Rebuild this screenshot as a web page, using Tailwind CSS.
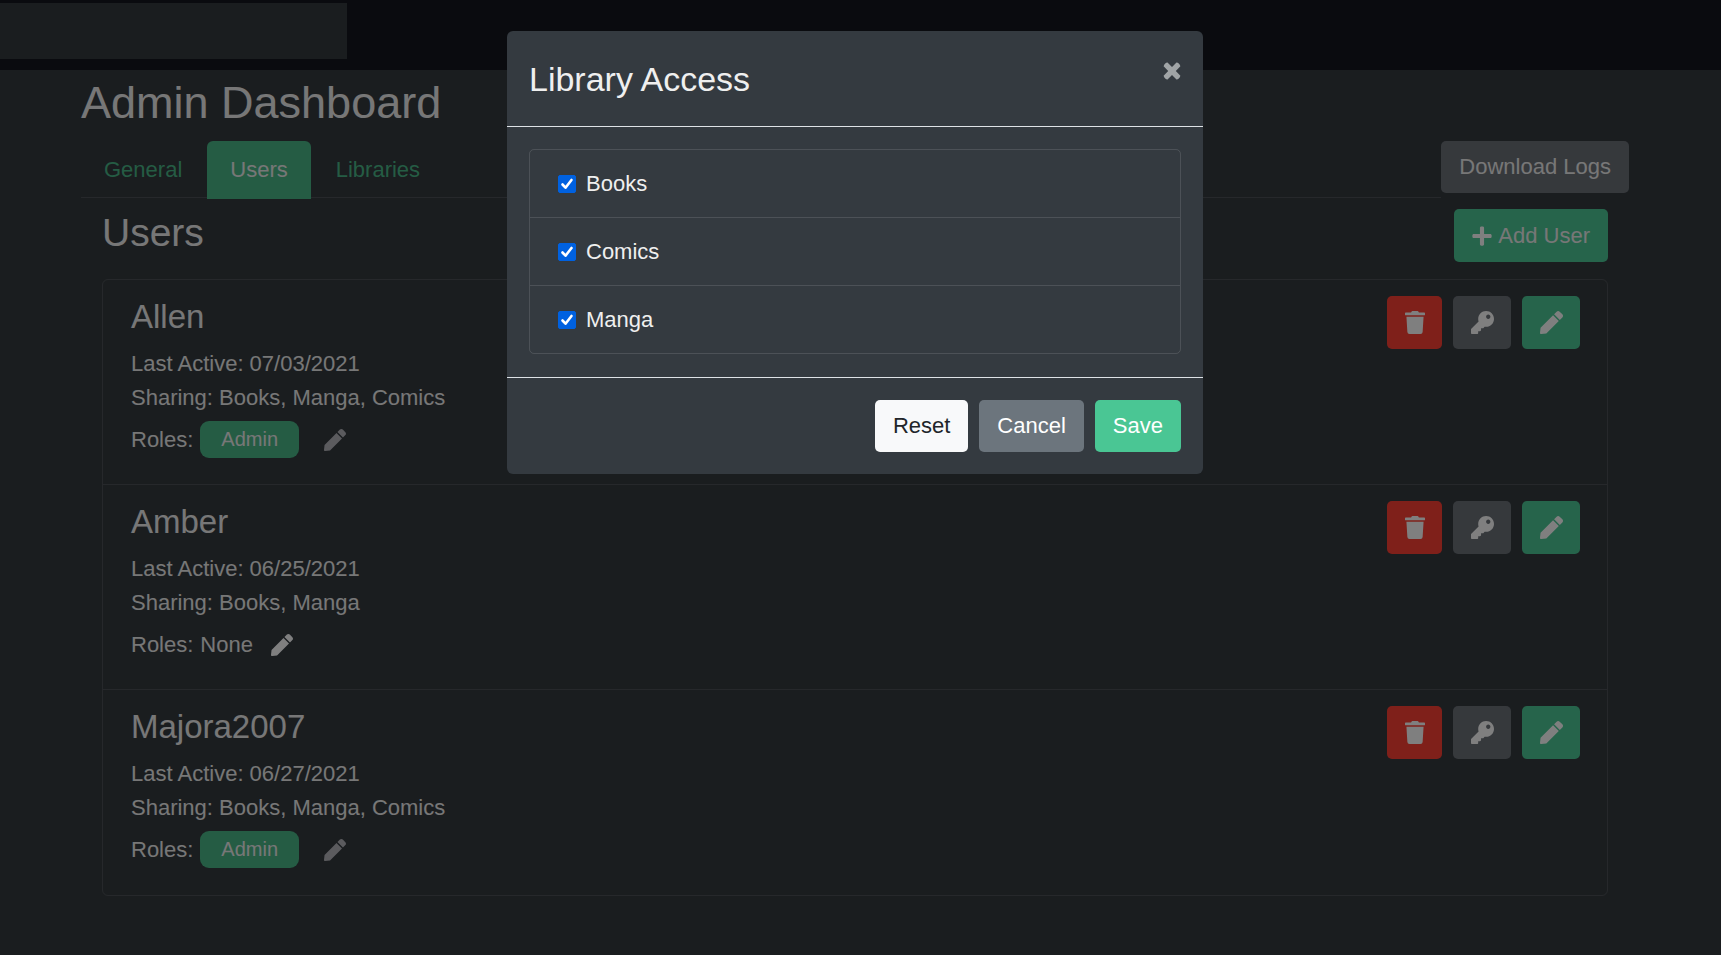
<!DOCTYPE html>
<html lang="en">
<head>
<meta charset="utf-8">
<meta name="viewport" content="width=device-width, initial-scale=1">
<title>Admin Dashboard</title>
<script src="https://cdn.jsdelivr.net/npm/@tailwindcss/browser@4"></script>
</head>
<body class="min-h-screen bg-[#343a3f] font-['Liberation_Sans',Arial,sans-serif] text-[22px] leading-[34px] text-[#efefef]">

<svg class="hidden" aria-hidden="true">
  <symbol id="trash" viewBox="0 0 448 512"><path d="M432 32H312l-9.4-18.7A24 24 0 0 0 281.1 0H166.8a23.72 23.72 0 0 0-21.4 13.3L136 32H16A16 16 0 0 0 0 48v32a16 16 0 0 0 16 16h416a16 16 0 0 0 16-16V48a16 16 0 0 0-16-16zM32 128l21.2 339a48 48 0 0 0 47.9 45h245.8a48 48 0 0 0 47.9-45L416 128z"/></symbol>
  <symbol id="key" viewBox="0 0 512 512"><path d="M512 176.001C512 273.203 433.202 352 336 352c-11.22 0-22.19-1.062-32.827-3.069l-24.012 27.014A23.999 23.999 0 0 1 261.223 384H224v40c0 13.255-10.745 24-24 24h-40v40c0 13.255-10.745 24-24 24H24c-13.255 0-24-10.745-24-24v-78.059c0-6.365 2.529-12.47 7.029-16.971l161.802-161.802C163.108 213.814 160 195.271 160 176 160 78.798 238.797.001 335.999 0 433.488-.001 512 78.511 512 176.001zM336 128c0 26.51 21.49 48 48 48s48-21.49 48-48-21.49-48-48-48-48 21.49-48 48z"/></symbol>
  <symbol id="pen" viewBox="0 0 512 512"><path d="M290.74 93.24l128.02 128.02-277.99 277.99-114.14 12.6C11.35 513.54-1.56 500.62.14 485.34l12.7-114.22 277.9-277.88zm207.2-19.06l-60.11-60.11c-18.75-18.75-49.16-18.75-67.91 0l-56.55 56.55 128.02 128.02 56.55-56.55c18.75-18.76 18.75-49.16 0-67.91z"/></symbol>
  <symbol id="plus" viewBox="0 0 448 512"><path d="M416 208H272V64c0-17.67-14.33-32-32-32h-32c-17.67 0-32 14.33-32 32v144H32c-17.67 0-32 14.33-32 32v32c0 17.67 14.33 32 32 32h144v144c0 17.67 14.33 32 32 32h32c17.67 0 32-14.33 32-32V304h144c17.67 0 32-14.33 32-32v-32c0-17.67-14.33-32-32-32z"/></symbol>
  <symbol id="check" viewBox="0 0 18 18"><path d="M4.5 9.5l3 3.2 6-7.7" fill="none" stroke="currentColor" stroke-width="2.6" stroke-linecap="round" stroke-linejoin="round"/></symbol>
  <symbol id="close" viewBox="0 0 18 18"><path d="M4.500 0.500 Q3.500 0.300 2.500 1.200 Q0.800 2.500 0.600 4.200L5.200 9 0.600 13.800Q0.800 15.500 2.500 16.800Q3.500 17.700 4.500 17.500L9 13 13.500 17.500Q14.500 17.700 15.500 16.800Q17.200 15.500 17.400 13.800L12.800 9 17.400 4.200Q17.200 2.500 15.500 1.200Q14.500 0.300 13.500 0.500L9 5Z"/></symbol>
</svg>

<header class="bg-[#15171e] pt-[3px] pb-[11px]">
  <div class="h-14 w-[347px] bg-[#343a3f]"></div>
</header>

<main class="pr-[11px]">
  <div class="mx-auto max-w-[1590px] px-[21px] pt-1.5">
    <h1 class="mb-3 text-[45px] leading-[53px]">Admin Dashboard</h1>

    <div class="flex items-start">
      <nav class="flex-1 border-b border-white/12">
        <ul class="-mb-0.5 flex gap-0.5">
          <li><a href="#general" class="block px-[23px] py-3 text-[#4ab888]">General</a></li>
          <li><a href="#users" aria-current="page" class="block rounded-t-md bg-[#4ab888] px-[23px] py-3">Users</a></li>
          <li><a href="#libraries" class="block px-[23px] py-3 text-[#4ab888]">Libraries</a></li>
        </ul>
      </nav>
      <button type="button" class="rounded-[5px] bg-[#6c7279] px-[18px] py-[9px]">Download Logs</button>
    </div>

    <section class="px-[21px] pt-[11px]">
      <div class="mb-[17px] flex items-start justify-between">
        <h2 class="text-[39px] leading-[47px]">Users</h2>
        <button type="button" class="flex h-[53px] items-center gap-1.5 rounded-[5px] bg-[#4cc896] px-[18px]"><svg class="h-[22px] w-5 fill-white"><use href="#plus"/></svg>Add User</button>
      </div>

      <ul class="divide-y divide-white/12 rounded-md border border-white/12">
        <li class="flex h-[205px] items-start justify-between pt-4 pr-[27px] pl-7">
          <div>
            <h3 class="mb-[9px] text-[33px] leading-[42px]">Allen</h3>
            <div>Last Active: 07/03/2021</div>
            <div>Sharing: Books, Manga, Comics</div>
            <div class="mt-1.5 flex items-center"><span class="mr-[7px]">Roles:</span><span class="rounded-[9px] bg-[#4ab888] px-[21px] py-1 text-xl leading-[29px]">Admin</span><button type="button" aria-label="Edit roles of Allen" class="ml-[25px]"><svg class="size-[22px] fill-[#b6b6bc]"><use href="#pen"/></svg></button></div>
          </div>
          <div class="flex gap-[11px]">
            <button type="button" aria-label="Delete Allen" class="grid h-[53px] w-[55px] place-items-center rounded-[5px] bg-[#ff4034]"><svg class="h-[23px] w-5 fill-white"><use href="#trash"/></svg></button>
            <button type="button" aria-label="Reset password of Allen" class="grid h-[53px] w-[58px] place-items-center rounded-[5px] bg-[#6c7279]"><svg class="size-[23px] fill-white"><use href="#key"/></svg></button>
            <button type="button" aria-label="Edit Allen" class="grid h-[53px] w-[58px] place-items-center rounded-[5px] bg-[#4cc896]"><svg class="size-[23px] fill-white"><use href="#pen"/></svg></button>
          </div>
        </li>
        <li class="flex h-[205px] items-start justify-between pt-4 pr-[27px] pl-7">
          <div>
            <h3 class="mb-[9px] text-[33px] leading-[42px]">Amber</h3>
            <div>Last Active: 06/25/2021</div>
            <div>Sharing: Books, Manga</div>
            <div class="mt-2 flex items-center"><span class="mr-[7px]">Roles:</span><span>None</span><button type="button" aria-label="Edit roles of Amber" class="ml-[18px]"><svg class="size-[22px] fill-white"><use href="#pen"/></svg></button></div>
          </div>
          <div class="flex gap-[11px]">
            <button type="button" aria-label="Delete Amber" class="grid h-[53px] w-[55px] place-items-center rounded-[5px] bg-[#ff4034]"><svg class="h-[23px] w-5 fill-white"><use href="#trash"/></svg></button>
            <button type="button" aria-label="Reset password of Amber" class="grid h-[53px] w-[58px] place-items-center rounded-[5px] bg-[#6c7279]"><svg class="size-[23px] fill-white"><use href="#key"/></svg></button>
            <button type="button" aria-label="Edit Amber" class="grid h-[53px] w-[58px] place-items-center rounded-[5px] bg-[#4cc896]"><svg class="size-[23px] fill-white"><use href="#pen"/></svg></button>
          </div>
        </li>
        <li class="flex h-[205px] items-start justify-between pt-4 pr-[27px] pl-7">
          <div>
            <h3 class="mb-[9px] text-[33px] leading-[42px]">Majora2007</h3>
            <div>Last Active: 06/27/2021</div>
            <div>Sharing: Books, Manga, Comics</div>
            <div class="mt-1.5 flex items-center"><span class="mr-[7px]">Roles:</span><span class="rounded-[9px] bg-[#4ab888] px-[21px] py-1 text-xl leading-[29px]">Admin</span><button type="button" aria-label="Edit roles of Majora2007" class="ml-[25px]"><svg class="size-[22px] fill-[#b6b6bc]"><use href="#pen"/></svg></button></div>
          </div>
          <div class="flex gap-[11px]">
            <button type="button" aria-label="Delete Majora2007" class="grid h-[53px] w-[55px] place-items-center rounded-[5px] bg-[#ff4034]"><svg class="h-[23px] w-5 fill-white"><use href="#trash"/></svg></button>
            <button type="button" aria-label="Reset password of Majora2007" class="grid h-[53px] w-[58px] place-items-center rounded-[5px] bg-[#6c7279]"><svg class="size-[23px] fill-white"><use href="#key"/></svg></button>
            <button type="button" aria-label="Edit Majora2007" class="grid h-[53px] w-[58px] place-items-center rounded-[5px] bg-[#4cc896]"><svg class="size-[23px] fill-white"><use href="#pen"/></svg></button>
          </div>
        </li>
      </ul>
    </section>
  </div>
</main>

<!-- Backdrop and dialog -->
<div class="fixed inset-0 overflow-auto bg-black/50 pt-[31px] pr-[11px]">
  <div role="dialog" aria-modal="true" aria-labelledby="dialog-title" class="mx-auto max-w-[696px] rounded-md bg-[#343a40]">
    <div class="flex items-start justify-between border-b border-[#dee2e6] px-[22px] pt-[23px] pb-[22px]">
      <h2 id="dialog-title" class="text-[34px] leading-[50px]">Library Access</h2>
      <button type="button" aria-label="Close" class="mt-2"><svg class="size-[18px] fill-[#a0a4a6]"><use href="#close"/></svg></button>
    </div>
    <div class="px-[22px] pt-[22px] pb-[23px]">
      <ul class="divide-y divide-white/12 rounded-[5px] border border-white/12">
        <li class="flex items-center px-7 py-[17px] leading-[33px]">
          <span class="mr-2.5 grid size-[18px]"><input id="books" type="checkbox" checked class="peer col-start-1 row-start-1 size-[18px] appearance-none rounded-xs border border-[#8f8f9d] checked:border-[#0061e0] checked:bg-[#0061e0]"><svg class="pointer-events-none col-start-1 row-start-1 hidden size-[18px] text-white peer-checked:block"><use href="#check"/></svg></span>
          <label for="books">Books</label>
        </li>
        <li class="flex items-center px-7 py-[17px] leading-[33px]">
          <span class="mr-2.5 grid size-[18px]"><input id="comics" type="checkbox" checked class="peer col-start-1 row-start-1 size-[18px] appearance-none rounded-xs border border-[#8f8f9d] checked:border-[#0061e0] checked:bg-[#0061e0]"><svg class="pointer-events-none col-start-1 row-start-1 hidden size-[18px] text-white peer-checked:block"><use href="#check"/></svg></span>
          <label for="comics">Comics</label>
        </li>
        <li class="flex items-center px-7 py-[17px] leading-[33px]">
          <span class="mr-2.5 grid size-[18px]"><input id="manga" type="checkbox" checked class="peer col-start-1 row-start-1 size-[18px] appearance-none rounded-xs border border-[#8f8f9d] checked:border-[#0061e0] checked:bg-[#0061e0]"><svg class="pointer-events-none col-start-1 row-start-1 hidden size-[18px] text-white peer-checked:block"><use href="#check"/></svg></span>
          <label for="manga">Manga</label>
        </li>
      </ul>
    </div>
    <div class="flex justify-end gap-[11px] border-t border-[#dee2e6] p-[22px]">
      <button type="button" class="rounded-[5px] bg-[#f8f9fa] px-[18px] py-[9px] text-[#212529]">Reset</button>
      <button type="button" class="rounded-[5px] bg-[#6c757d] px-[18px] py-[9px] text-white">Cancel</button>
      <button type="button" class="rounded-[5px] bg-[#4ac694] px-[18px] py-[9px] text-white">Save</button>
    </div>
  </div>
</div>
</body>
</html>
